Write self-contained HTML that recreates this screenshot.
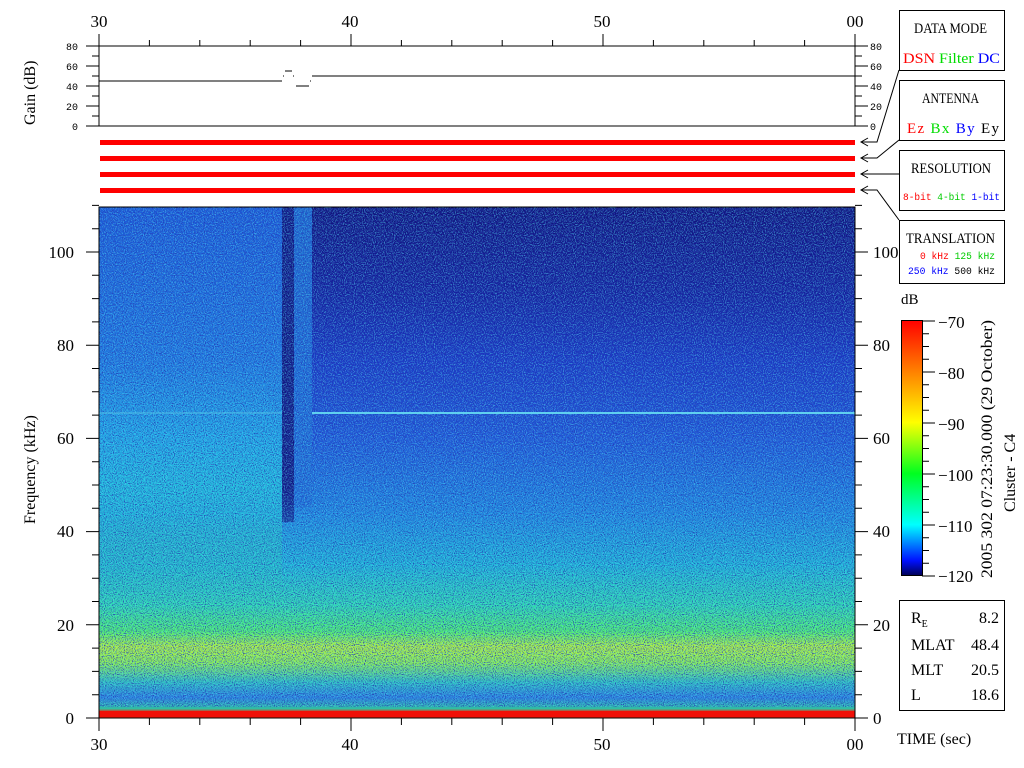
<!DOCTYPE html>
<html><head><meta charset="utf-8"><style>
html,body{margin:0;padding:0;background:#fff;width:1024px;height:768px;overflow:hidden}
svg{display:block}
text{font-family:"Liberation Serif",serif;fill:#000}
.m text,text.m{font-family:"Liberation Mono",monospace}
</style></head><body>
<svg width="1024" height="768" viewBox="0 0 1024 768" xmlns="http://www.w3.org/2000/svg">
<defs>
<linearGradient id="gl" x1="0" y1="207" x2="0" y2="718" gradientUnits="userSpaceOnUse">
<stop offset="0" stop-color="#1c5ad8"/><stop offset="0.3" stop-color="#2078e0"/>
<stop offset="0.45" stop-color="#22a8e6"/><stop offset="0.6" stop-color="#22c4d8"/>
<stop offset="0.72" stop-color="#30dca0"/><stop offset="0.8" stop-color="#60ee60"/>
<stop offset="0.86" stop-color="#c0f040"/><stop offset="0.89" stop-color="#a0f050"/>
<stop offset="0.93" stop-color="#30c0c0"/><stop offset="0.96" stop-color="#2a80e0"/>
<stop offset="0.982" stop-color="#30c0a0"/><stop offset="0.988" stop-color="#f02010"/><stop offset="1" stop-color="#f02010"/>
</linearGradient>
<linearGradient id="gr" x1="0" y1="207" x2="0" y2="718" gradientUnits="userSpaceOnUse">
<stop offset="0" stop-color="#10127a"/><stop offset="0.17" stop-color="#14209c"/>
<stop offset="0.3" stop-color="#1a38c4"/><stop offset="0.45" stop-color="#2058d8"/>
<stop offset="0.6" stop-color="#2088e0"/><stop offset="0.7" stop-color="#20b4d8"/>
<stop offset="0.78" stop-color="#30d8b0"/><stop offset="0.83" stop-color="#50ee70"/>
<stop offset="0.86" stop-color="#b0f040"/><stop offset="0.89" stop-color="#90f050"/>
<stop offset="0.93" stop-color="#30c0c0"/><stop offset="0.96" stop-color="#2a80e0"/>
<stop offset="0.982" stop-color="#30c0a0"/><stop offset="0.988" stop-color="#f02010"/><stop offset="1" stop-color="#f02010"/>
</linearGradient>
<linearGradient id="cb" x1="0" y1="576" x2="0" y2="320" gradientUnits="userSpaceOnUse">
<stop offset="0" stop-color="#000050"/><stop offset="0.06" stop-color="#0010ff"/>
<stop offset="0.2" stop-color="#00ffff"/><stop offset="0.4" stop-color="#00ff20"/>
<stop offset="0.6" stop-color="#ffff00"/><stop offset="0.8" stop-color="#ff8000"/>
<stop offset="1" stop-color="#ff0000"/>
</linearGradient>
<linearGradient id="fade" x1="0" y1="207" x2="0" y2="718" gradientUnits="userSpaceOnUse">
<stop offset="0" stop-color="#fff"/><stop offset="0.55" stop-color="#fff"/><stop offset="0.75" stop-color="#000"/>
</linearGradient>
<mask id="fm"><rect x="0" y="0" width="1024" height="768" fill="url(#fade)"/></mask>
<filter id="nzd" x="0" y="0" width="1" height="1">
<feTurbulence type="fractalNoise" baseFrequency="0.9" numOctaves="1" seed="3"/>
<feColorMatrix values="0 0 0 0 0.02  0 0 0 0 0.04  0 0 0 0 0.45  0 0 0 -5 2.6"/>
</filter>
<filter id="nzl" x="0" y="0" width="1" height="1">
<feTurbulence type="fractalNoise" baseFrequency="0.9" numOctaves="1" seed="11"/>
<feColorMatrix values="0 0 0 0 0.1  0 0 0 0 0.85  0 0 0 0 0.95  0 0 0 -5 2.6"/>
</filter>
</defs>

<rect x="99" y="207" width="756" height="511" fill="url(#gr)"/>
<g mask="url(#fm)">
<rect x="99" y="207" width="183" height="511" fill="url(#gl)"/>
<rect x="282" y="207" width="12" height="315" fill="#101880"/>
<rect x="294" y="207" width="18" height="300" fill="#2070d8" opacity="0.9"/>
</g>
<rect x="99" y="207" width="756" height="500" filter="url(#nzd)" opacity="0.8"/>
<rect x="99" y="207" width="756" height="500" filter="url(#nzl)" opacity="0.45"/>
<rect x="312" y="412" width="543" height="2" fill="#60d0f0"/>
<rect x="99" y="412" width="183" height="2" fill="#50c0e8" opacity="0.5"/>
<rect x="99" y="711" width="756" height="6" fill="#f01008"/>
<rect x="99" y="207" width="756" height="511" fill="none" stroke="#000" stroke-width="1"/>

<path d="M99 46H855M99 126H855M99 35V126M855 35V126" stroke="#000" fill="none"/>
<path d="M99 81H282M283 76H284M285 71H292M293 76H294M296 86H309M310 81H311M312 76H855" stroke="#000" fill="none"/>
<g id="ticks" stroke="#000" fill="none"></g>

<rect x="100" y="140" width="755" height="5" fill="#ff0000"/>
<rect x="100" y="156" width="755" height="5" fill="#ff0000"/>
<rect x="100" y="172" width="755" height="5" fill="#ff0000"/>
<rect x="100" y="188" width="755" height="5" fill="#ff0000"/>

<g font-size="17" text-anchor="middle">
<text x="99" y="27">30</text><text x="350" y="27">40</text><text x="602" y="27">50</text><text x="855" y="27">00</text>
<text x="99" y="750">30</text><text x="350" y="750">40</text><text x="602" y="750">50</text><text x="855" y="750">00</text>
</g>
<g class="m" font-size="10" text-anchor="end">
<text x="78" y="50">80</text><text x="78" y="70">60</text><text x="78" y="90">40</text><text x="78" y="110">20</text><text x="78" y="130">0</text>
</g>
<g class="m" font-size="10">
<text x="870" y="50">80</text><text x="870" y="70">60</text><text x="870" y="90">40</text><text x="870" y="110">20</text><text x="870" y="130">0</text>
</g>
<text font-size="16" transform="translate(35,125) rotate(-90)">Gain (dB)</text>
<text font-size="16" transform="translate(35,524) rotate(-90)">Frequency (kHz)</text>
<g font-size="17" text-anchor="end">
<text x="74" y="258">100</text><text x="74" y="351">80</text><text x="74" y="444">60</text><text x="74" y="537">40</text><text x="74" y="631">20</text><text x="74" y="724">0</text>
</g>
<g font-size="17">
<text x="873" y="258">100</text><text x="873" y="351">80</text><text x="873" y="444">60</text><text x="873" y="537">40</text><text x="873" y="631">20</text><text x="873" y="724">0</text>
</g>

<g fill="#fff" stroke="#000">
<rect x="899.5" y="10.5" width="105" height="60"/>
<rect x="899.5" y="80.5" width="105" height="60"/>
<rect x="899.5" y="150.5" width="105" height="60"/>
<rect x="899.5" y="220.5" width="105" height="63"/>
<rect x="899.5" y="600.5" width="105" height="110"/>
</g>
<path d="M899 70L877 142H861M899 140L877 158H861M899 174H861M899 220L877 190H861M868 138L861 142L868 146M868 154L861 158L868 162M868 170L861 174L868 178M868 186L861 190L868 194" stroke="#000" fill="none"/>
<g font-size="15">
<text x="914" y="33" textLength="73" lengthAdjust="spacingAndGlyphs">DATA MODE</text>
<text x="922" y="103" textLength="57" lengthAdjust="spacingAndGlyphs">ANTENNA</text>
<text x="911" y="173" textLength="80" lengthAdjust="spacingAndGlyphs">RESOLUTION</text>
<text x="906" y="243" textLength="89" lengthAdjust="spacingAndGlyphs">TRANSLATION</text>
</g>
<text font-size="15" x="903" y="63" textLength="97" lengthAdjust="spacingAndGlyphs"><tspan fill="#f00">DSN</tspan><tspan fill="#0d0"> Filter</tspan><tspan fill="#00f"> DC</tspan></text>
<text font-size="15" x="907" y="133" textLength="92" lengthAdjust="spacing"><tspan fill="#f00">Ez</tspan><tspan fill="#0d0"> Bx</tspan><tspan fill="#00f"> By</tspan><tspan> Ey</tspan></text>
<g class="m" font-size="10">
<text x="903" y="200" textLength="97" lengthAdjust="spacingAndGlyphs"><tspan fill="#f00">8-bit </tspan><tspan fill="#0c0">4-bit </tspan><tspan fill="#00f">1-bit</tspan></text>
<text x="920" y="259" textLength="75" lengthAdjust="spacingAndGlyphs"><tspan fill="#f00">0 kHz</tspan><tspan fill="#0c0"> 125 kHz</tspan></text>
<text x="908" y="274" textLength="87" lengthAdjust="spacingAndGlyphs"><tspan fill="#00f">250 kHz</tspan><tspan> 500 kHz</tspan></text>
</g>

<text font-size="15" x="901" y="304">dB</text>
<rect x="901.5" y="320.5" width="21" height="255" fill="url(#cb)" stroke="#000"/>
<g font-size="17">
<text x="938" y="328">−70</text><text x="938" y="379">−80</text><text x="938" y="430">−90</text>
<text x="938" y="481">−100</text><text x="938" y="532">−110</text><text x="938" y="582">−120</text>
</g>
<text font-size="16" transform="translate(992,578) rotate(-90)" textLength="258" lengthAdjust="spacingAndGlyphs">2005 302 07:23:30.000 (29 October)</text>
<text font-size="16" transform="translate(1015,512) rotate(-90)">Cluster - C4</text>

<g font-size="16">
<text x="911" y="623">R<tspan font-size="10" dy="4">E</tspan></text>
<text x="911" y="650">MLAT</text><text x="911" y="675">MLT</text><text x="911" y="700">L</text>
</g>
<g font-size="16" text-anchor="end">
<text x="999" y="623">8.2</text><text x="999" y="650">48.4</text><text x="999" y="675">20.5</text><text x="999" y="700">18.6</text>
</g>
<text font-size="16" x="897" y="744">TIME (sec)</text>
</svg>
<script>
(function(){
var d="";
for(var s=0;s<=30;s+=2){var x=99+s*(756/30);var maj=s%10==0;
d+="M"+x+" "+(maj?34:40)+"V46";
d+="M"+x+" 718V"+(maj?731:725);}
for(var g=0;g<=80;g+=10){var y=126-g;var maj=g%20==0;
d+="M"+(maj?86:92)+" "+y+"H99M855 "+y+"H"+(maj?868:862);}
for(var f=0;f<=110;f+=5){var y=718-f*4.66;var maj=f%20==0;
d+="M"+(maj?86:92)+" "+y+"H99M855 "+y+"H"+(maj?868:862);}
for(var c=0;c<=50;c+=2.5){var y=576-c*5.1;var maj=c%10==0;
d+="M922 "+y+"H"+(maj?935:929);}
document.getElementById("ticks").innerHTML='<path d="'+d+'"/>';
})();
</script>
</body></html>
